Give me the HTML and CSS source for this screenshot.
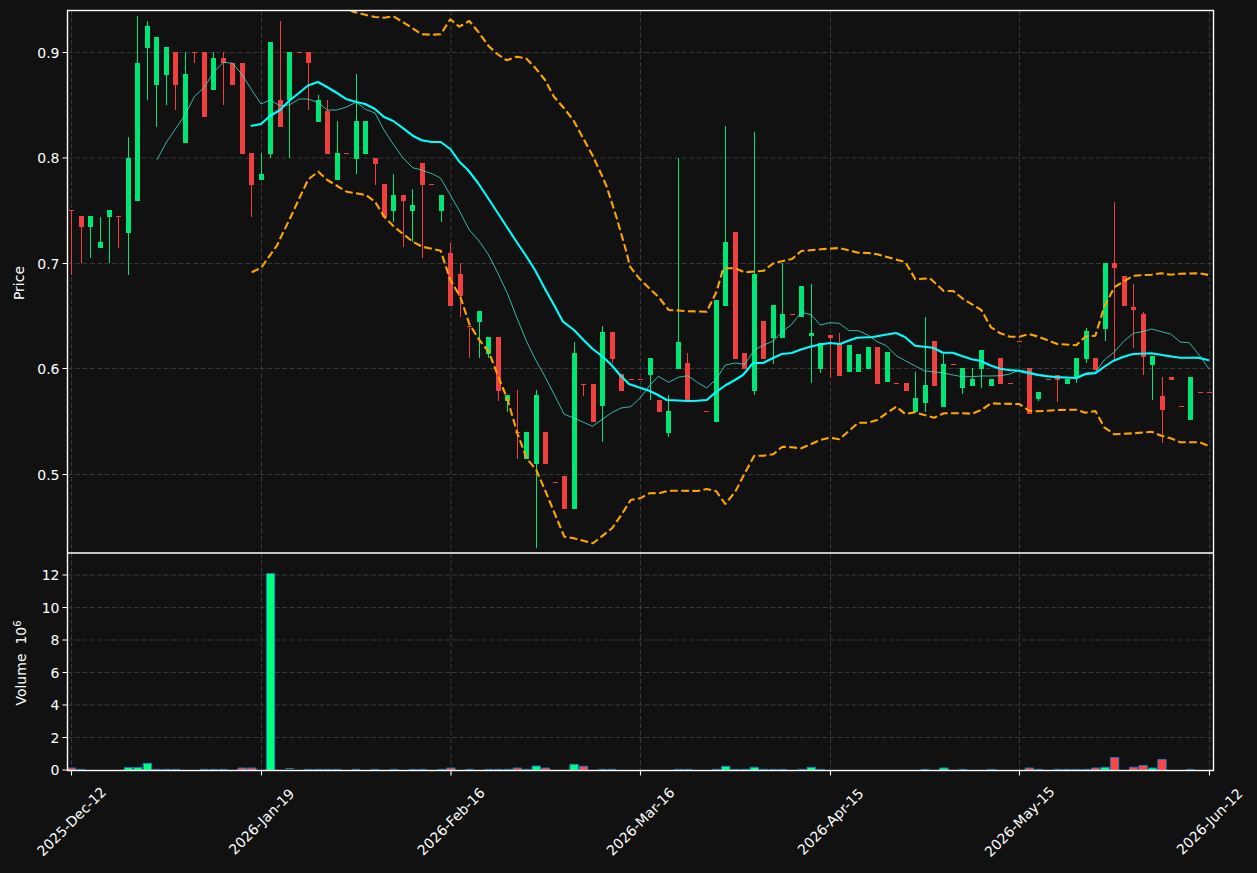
FILE: index.html
```html
<!DOCTYPE html>
<html lang="en">
<head>
<meta charset="utf-8">
<title>Price and volume chart</title>
<link rel="stylesheet" href="styles.css">
</head>
<body>
<main class="chart">
<svg class="plot" width="1257" height="873" viewBox="0 0 1257 873" xmlns="http://www.w3.org/2000/svg">
<defs>
<clipPath id="price-clip"><rect x="67.5" y="10.5" width="1146" height="542.5"/></clipPath>
<clipPath id="vol-clip"><rect x="67.5" y="553" width="1146" height="217.5"/></clipPath>
</defs>

<path class="grid" d="M67.5 52.5H1213M67.5 158H1213M67.5 263.5H1213M67.5 368.5H1213M67.5 474.5H1213"/>
<path class="grid" d="M71.5 10.5V553M261.5 10.5V553M451 10.5V553M640.5 10.5V553M830.5 10.5V553M1019.5 10.5V553M1209.5 10.5V553"/>
<path class="grid" d="M67.5 575H1213M67.5 607.5H1213M67.5 640H1213M67.5 672.5H1213M67.5 705H1213M67.5 737.5H1213"/>
<path class="grid" d="M71.5 553V770M261.5 553V770M451 553V770M640.5 553V770M830.5 553V770M1019.5 553V770M1209.5 553V770"/>

<g clip-path="url(#price-clip)">
<path class="wick up" d="M90.5 216V258.3M100 216.7V247.7M109.4 210V263.3M128.4 137.3V274.7M137.9 16V200.7M147.4 21.3V100.3M156.8 37V126.7M166.3 47V105.3M185.3 52.3V142.7M213.7 52.3V89.7M261.2 153.3V179.7M270.6 42V158.3M289.6 52.3V158.3M318.1 95.3V121.7M337 121.3V179.7M356 74V174.3M393.9 174.3V221.7M412.9 189.3V242M441.3 195V221.7M479.3 311V358.3M488.8 337V358.3M507.7 395V411.7M536.2 390.3V548.3M574.1 342.3V508.7M602.5 326.3V442.3M650 358V400M668.9 395.3V437.3M678.4 158.3V368.7M725.8 126V305.7M754.3 131.7V395.3M773.2 305V364.3M782.7 263.3V337.7M811.2 284.3V383.3M820.7 343V373.3M915.5 371.7V412M925 316.7V411.7M943.9 354.3V406.7M962.9 368V394.3M972.4 368.3V385.7M981.9 350V387.7M1038.8 392V401M1076.7 358V383.3M1086.2 328.3V362.7M1105.1 263V341.3M1152.6 356V400.3"/>
<path class="body up" d="M90.5 216V226.7M100 242.3V247.7M109.4 210V216.7M128.4 158V232.7M137.9 63V200.7M147.4 26V47.7M156.8 37V84.7M166.3 47V74.7M185.3 74V142.7M213.7 58V89.7M261.2 174V179.7M270.6 42V153.7M289.6 52.3V100M318.1 100V121.7M337 153V179.7M356 121V158.7M365.5 121V153.7M393.9 195V210.7M412.9 205V210.7M441.3 195V210.7M479.3 311V321.7M488.8 337V353.7M507.7 395V400.7M526.7 432.3V458.7M536.2 395V463.7M574.1 353V508.7M602.5 332V405.7M650 358V375M668.9 411V432.7M678.4 342V368.7M716.3 300V421.7M725.8 242V305.7M754.3 274V390.7M773.2 305V337.7M782.7 314V337.7M801.7 286V316.7M811.2 333V336M820.7 343V368.7M849.1 345V371.7M858.6 354V371.7M868.1 347V368.7M887 352V381.7M915.5 398V412M925 385V402.7M943.9 364V406.7M962.9 368V388M972.4 379V385.7M981.9 350V369M991.4 379V385.7M1038.8 392V399M1067.2 379V383.7M1076.7 358V376.7M1086.2 331V359M1105.1 263V328.7M1152.6 356V364.7M1190.5 377V419.7"/>
<path class="wick down" d="M71.5 210.3V274.7M81 216V263.3M118.9 216.3V247.7M175.8 52.3V110.3M194.8 52.3V63.3M223.2 52.3V105.3M251.7 153V216.7M280.1 21.3V126.7M308.6 52.3V110.3M327.5 100V153.7M375 158V184.7M403.4 195V247.3M422.4 163V258.3M450.8 242.7V305.7M460.3 263.3V316.7M469.8 326.3V358.3M498.2 337V400.7M517.2 390.3V458.7M583.6 384.3V395.7M612 332V363.3M687.9 353.3V400M830.1 335V377.7M839.6 333.3V375.7M1057.7 375V402.3M1114.6 202.3V360M1133.6 284.3V347.7M1143.1 312V375.3M1162 377.3V442.7"/>
<path class="body down" d="M71.5 210V211M81 216V226.7M118.9 216V217M175.8 52.3V84.7M194.8 52V53M204.3 52.3V116.7M223.2 58V63.3M232.7 63.3V84.7M242.2 63.3V153.7M251.7 153V184.7M280.1 100V126.7M299.1 52V53M308.6 52.3V63.3M327.5 110.7V153.7M346.5 153V154M375 158V164M384.4 184V216.7M403.4 195V200.7M422.4 163V184.7M431.9 184V185M450.8 253V305.7M460.3 274V295.7M469.8 326V327M498.2 337V390.7M517.2 432V433M545.6 432.3V463.7M555.1 482V483M564.6 476V508.7M583.6 384V385M593.1 384V421.7M612 332V359M621.5 374V390.7M631 379V380M640.5 379V380M659.4 400V411.7M687.9 363V400M706.9 411V412M735.3 232V358.7M744.8 353V368.7M763.8 321V358.7M792.2 314V315M830.1 335V338M839.6 344V375.7M877.6 347V383.7M896.5 383V384M906 383V390.7M934.5 341V385.7M953.4 364V365M1000.8 358V384M1010.3 383V384M1019.8 341V342M1029.3 368V413.7M1048.2 379V380M1057.7 375V379.7M1095.7 358V369.7M1114.6 263V268M1124.1 276V305.7M1133.6 307V310M1143.1 314V356.7M1162 396V410M1171.5 377V380M1181 406V407M1200 392V393M1209.5 392V393"/>

<polyline class="ma-slow" points="156.7,160.3 166.7,141.7 185,115 194.3,96.7 204.3,87.3 213,73 223.3,62.3 232.7,63.3 242.3,75 251.7,90 261,104 270,100 280,105.7 289.3,105 299.3,99 308.3,99 318.3,102.7 327.3,110 336.7,110 346.7,107 356.3,102 365.3,109.3 375,113 384,130 393.3,144.3 403.3,158.3 412.7,167.7 421.7,170 433.3,174.3 440.7,178.3 450.3,195 460,212 469.3,230 478.3,240 488.3,254.3 497.8,273 507.3,293.3 517,318 526.7,341.7 535.7,360 545,376.7 554.5,395 564,414 573.5,418 583,422 592.3,426.3 602,419.5 611.7,412.7 621,408 630.7,406.7 640,398 649.3,386 658.3,376.3 668.7,382.3 678.3,377.3 687.7,375.7 697.3,382.3 706.7,388 716.3,379 725.3,365 735.3,363 744.7,364.3 754.3,350 763.7,345 773.3,341 782.3,331.7 792,324 801.3,312.3 811,314.7 820.3,325 830,322.7 839.3,323.3 849,330.7 858.3,330.7 868,335 877.3,341.7 886.3,345.7 896.3,355.7 905.3,360.7 915.3,366 924.3,370.7 934.3,372 943.7,373 953,375 962.3,376.7 972.3,376.7 981.3,376 991,376 1000.3,375.7 1010,374 1019.3,370 1029,371.7 1038.3,374.3 1048,375.7 1057.3,376.7 1067,377.3 1076.3,377.7 1085.3,373 1095.3,372 1104.3,360 1114.3,352 1123.3,341.7 1133.3,333.3 1142.3,331.7 1151.7,329 1161.3,331.7 1170.7,334 1180.3,342 1189.3,342.7 1199.7,355.7 1209,369"/>
<polyline class="ma-fast" points="250.7,126 261,124 270,116 280,110 289,101 299,93 308,85.5 318,82 327,87 337,93 346.7,99.3 356.3,102 365.3,104 375,109 384,117 393.3,121 403.3,128.3 412.7,135.7 421.7,140.3 431.7,142 440.7,142 450.3,149 459.3,161.7 468,170 478,183 488,198 497.5,212.5 506.7,226.7 516,241 525.5,255 535,270 544.5,288 554,305 563,321.7 574,330 583.5,340 592.7,349 602,356 611,364.5 620,375 629,384 640,387.7 649.3,390.7 658,395 666.7,400 678,400.5 688,401 697,400.8 706.7,400 716,392 726,385 735,380 743,375 753,363 763,363 772,358.5 781.7,354 791.7,353 801,349.5 810,346.7 820,344.5 830,343 840,344 849,340.5 857,337.7 873,337 884,335 896,333 905,337 915,345.7 933,347.7 943,352.7 952.7,352.7 962,356 971.7,359.3 980,360.7 990,365.3 1000,368.7 1009,370 1018,370.7 1028,373 1038,375 1048,376.5 1058,377.3 1076.7,378 1085,374.3 1095,373.3 1104,367 1113,361 1123,357 1133,354 1151.7,353.3 1165,355.5 1180,357.7 1198,357.7 1209,360.3"/>
<polyline class="band" points="350,10 353.3,11.7 363.3,14.3 375,17 384,17.7 393.3,16.3 403.3,22.3 412.7,28.3 421.7,34.3 431.7,34.7 440.7,34.3 450.3,19.3 459.3,26.7 469.3,21 478.7,32.3 488.3,45.7 497.3,54 506.7,60.3 516.7,56.7 526,58.3 535.7,68.3 545,80 554,96.7 564,108.3 573.3,120 582.3,136.7 592.3,155 601.7,175 606.7,186.7 616.7,218 626.7,253 630,266.7 640,279.3 649.3,288.3 658.3,296.7 668.7,310 678.4,310.5 687.9,311.2 706.7,311.7 716.3,292.3 723.3,268.3 735.3,268.3 744.7,272.3 763.7,270.7 773.3,263.3 792,259 801.3,251 820.3,249.3 839.3,248 858.3,252.7 868,253 877.3,254.3 905.3,262 915.3,279.3 930,278.3 943.7,291 953.3,291 962.3,298.3 981.3,310 991,327.3 1000.3,333.3 1010,336.7 1019.3,336.7 1029,334 1038.3,336.7 1057.3,344 1076.3,345.3 1085.3,336.7 1095.3,335.7 1104.3,306.7 1114.3,287.3 1123.3,281.7 1133.3,275.7 1151.7,274.7 1161.3,273.3 1170.7,274.7 1180.3,273.7 1199.7,273.3 1209,275"/>
<polyline class="band" points="251.7,272.3 261.3,267.7 277.3,245 280.3,238.3 289.3,220 299.3,198.3 308.3,179.3 318.3,171.7 327.3,180 337.3,186 346.7,191.7 366,195 375,201.7 384.3,216.7 394,226.7 412.7,241.7 422.3,246.7 440.7,250.7 450.3,280 460.3,296.7 469.3,324 479.3,340 488.7,351.7 498.3,376.7 507.7,400 517.3,433.3 526.7,458.3 536.3,470 545.7,491.7 555.3,515 564.3,536.7 574,538.3 593,543.3 612,528.3 621.3,515 630.7,500 640,498.3 649.3,493.3 660,493 668.7,490.7 678.3,490.7 697.3,491 706.7,489 716.3,491.3 725.3,504 735.3,491.7 744.7,473.3 754.3,455.7 763.7,455.7 773.3,454.3 782.3,446.7 792,447.3 801.3,448.3 820.3,440 830,437.7 839.3,439.3 858.3,422.7 868,422.7 877.3,420 886.3,413.3 896.3,406.7 905.3,414 915.3,412.3 924.3,415 934.3,417.7 943.7,413.3 962.3,413.3 972,413.7 981.3,410 991,403.3 1000.3,403.7 1019.3,404 1029,410.7 1038.3,411.3 1057.3,410 1076.3,409.7 1085.3,412.7 1095.3,411 1104.3,427.3 1114.3,434.3 1133.3,433.3 1151.7,431.7 1161.3,435.7 1170.7,438.3 1180.3,442.3 1199.7,442.3 1209,446"/>
</g>

<g clip-path="url(#vol-clip)">
<path class="vol vol-up" d="M266.4 770V573.5h8.4V770M133.7 770V767.5h8.4V770M124.2 770V767.5h8.4V770M143.2 770V763.3h8.4V770M532 770V766h8.4V770M569.9 770V764.3h8.4V770M721.6 770V766.3h8.4V770M750.1 770V767.3h8.4V770M807 770V767.3h8.4V770M939.7 770V768h8.4V770M1100.9 770V767.3h8.4V770M1148.4 770V768h8.4V770"/>
<path class="vol vol-down" d="M67.3 770V768h8.4V770M238 770V768h8.4V770M247.5 770V768h8.4V770M446.6 770V768h8.4V770M513 770V768h8.4V770M541.4 770V768h8.4V770M579.4 770V766.3h8.4V770M1025.1 770V768h8.4V770M1091.5 770V768h8.4V770M1110.4 770V757.5h8.4V770M1129.4 770V767.3h8.4V770M1138.9 770V765.5h8.4V770M1157.8 770V759.5h8.4V770"/>
<path class="vol vol-flat" d="M76.8 769.3h8.4M152.6 769.3h8.4M162.1 769.3h8.4M171.6 769.3h8.4M200.1 769.3h8.4M209.5 769.3h8.4M219 769.3h8.4M285.4 768.5h8.4M304.4 769.3h8.4M313.9 769.3h8.4M323.3 769.3h8.4M332.8 769.3h8.4M351.8 769.3h8.4M370.8 769.3h8.4M389.7 769.3h8.4M408.7 769.3h8.4M418.2 769.3h8.4M437.1 769.3h8.4M465.6 769.3h8.4M484.6 769.3h8.4M494 769.3h8.4M503.5 769.3h8.4M522.5 769.3h8.4M598.3 769.3h8.4M607.8 769.3h8.4M674.2 769.3h8.4M683.7 769.3h8.4M712.1 769.3h8.4M731.1 769.3h8.4M740.6 769.3h8.4M759.6 769.3h8.4M769 769.3h8.4M778.5 769.3h8.4M797.5 769.3h8.4M816.5 769.3h8.4M920.8 769.3h8.4M958.7 769.3h8.4M987.2 769.3h8.4M1034.6 769.3h8.4M1053.5 769.3h8.4M1063 769.3h8.4M1072.5 769.3h8.4M1082 769.3h8.4M1186.3 769.3h8.4"/>
</g>

<rect class="frame" x="67.5" y="10.5" width="1146" height="760"/>
<path class="frame" d="M67.5 553H1213.5"/>
<path class="tick" d="M62.5 52.5H67.5M62.5 158H67.5M62.5 263.5H67.5M62.5 368.5H67.5M62.5 474.5H67.5M62.5 575H67.5M62.5 607.5H67.5M62.5 640H67.5M62.5 672.5H67.5M62.5 705H67.5M62.5 737.5H67.5M62.5 770H67.5"/>
<path class="tick" d="M71.5 770V775.5M261.5 770V775.5M451 770V775.5M640.5 770V775.5M830.5 770V775.5M1019.5 770V775.5M1209.5 770V775.5"/>

<g class="labels-y">
<text x="59.5" y="57.5">0.9</text>
<text x="59.5" y="163">0.8</text>
<text x="59.5" y="268.5">0.7</text>
<text x="59.5" y="373.5">0.6</text>
<text x="59.5" y="479.5">0.5</text>
<text x="59.5" y="580">12</text>
<text x="59.5" y="612.5">10</text>
<text x="59.5" y="645">8</text>
<text x="59.5" y="677.5">6</text>
<text x="59.5" y="710">4</text>
<text x="59.5" y="742.5">2</text>
<text x="59.5" y="775">0</text>
</g>
<g class="labels-x">
<text x="71.5" y="826.5" transform="rotate(-45 71.5 821.5)">2025-Dec-12</text>
<text x="261.5" y="826.5" transform="rotate(-45 261.5 821.5)">2026-Jan-19</text>
<text x="451" y="826.5" transform="rotate(-45 451 821.5)">2026-Feb-16</text>
<text x="640.5" y="826.5" transform="rotate(-45 640.5 821.5)">2026-Mar-16</text>
<text x="830.5" y="826.5" transform="rotate(-45 830.5 821.5)">2026-Apr-15</text>
<text x="1019.5" y="826.5" transform="rotate(-45 1019.5 821.5)">2026-May-15</text>
<text x="1209.5" y="826.5" transform="rotate(-45 1209.5 821.5)">2026-Jun-12</text>
</g>
<text class="axis-title" x="23.5" y="283" transform="rotate(-90 23.5 283)">Price</text>
<text class="axis-title" x="26" y="663" transform="rotate(-90 26 663)">Volume  10<tspan class="sup" dy="-5.5">6</tspan></text>
</svg>
</main>
</body>
</html>
```
FILE: styles.css
```css
html, body {
  margin: 0;
  padding: 0;
  background: #111111;
  overflow: hidden;
}

.chart {
  width: 1257px;
  height: 873px;
}

.plot {
  display: block;
  font-family: "DejaVu Sans", sans-serif;
  font-size: 14px;
}

.plot text {
  fill: #ffffff;
}

.grid {
  fill: none;
  stroke: #383838;
  stroke-width: 1;
  stroke-dasharray: 5 2.4;
}

.wick {
  fill: none;
  stroke-width: 1;
  shape-rendering: crispEdges;
}

.body {
  fill: none;
  stroke-width: 5;
  shape-rendering: crispEdges;
}

.up {
  stroke: #00e676;
}

.down {
  stroke: #ef4040;
}

.ma-fast {
  fill: none;
  stroke: #00ffff;
  stroke-width: 2.1;
  stroke-linejoin: round;
}

.ma-slow {
  fill: none;
  stroke: #40e0d0;
  stroke-width: 1;
  stroke-opacity: 0.8;
  stroke-linejoin: round;
}

.band {
  fill: none;
  stroke: #ffa500;
  stroke-width: 2.1;
  stroke-dasharray: 7.8 3.4;
  stroke-linejoin: round;
}

.vol {
  stroke: #1f77b4;
  stroke-width: 1;
}

.vol-up {
  fill: #00ff7f;
}

.vol-down {
  fill: #ff4444;
}

.vol-flat {
  fill: none;
}

.frame {
  fill: none;
  stroke: #ffffff;
  stroke-width: 1.4;
}

.tick {
  fill: none;
  stroke: #ffffff;
  stroke-width: 1.1;
}

.labels-y text {
  text-anchor: end;
}

.labels-x text {
  text-anchor: middle;
}

.axis-title {
  text-anchor: middle;
  white-space: pre;
}

.sup {
  font-size: 10px;
}
```
